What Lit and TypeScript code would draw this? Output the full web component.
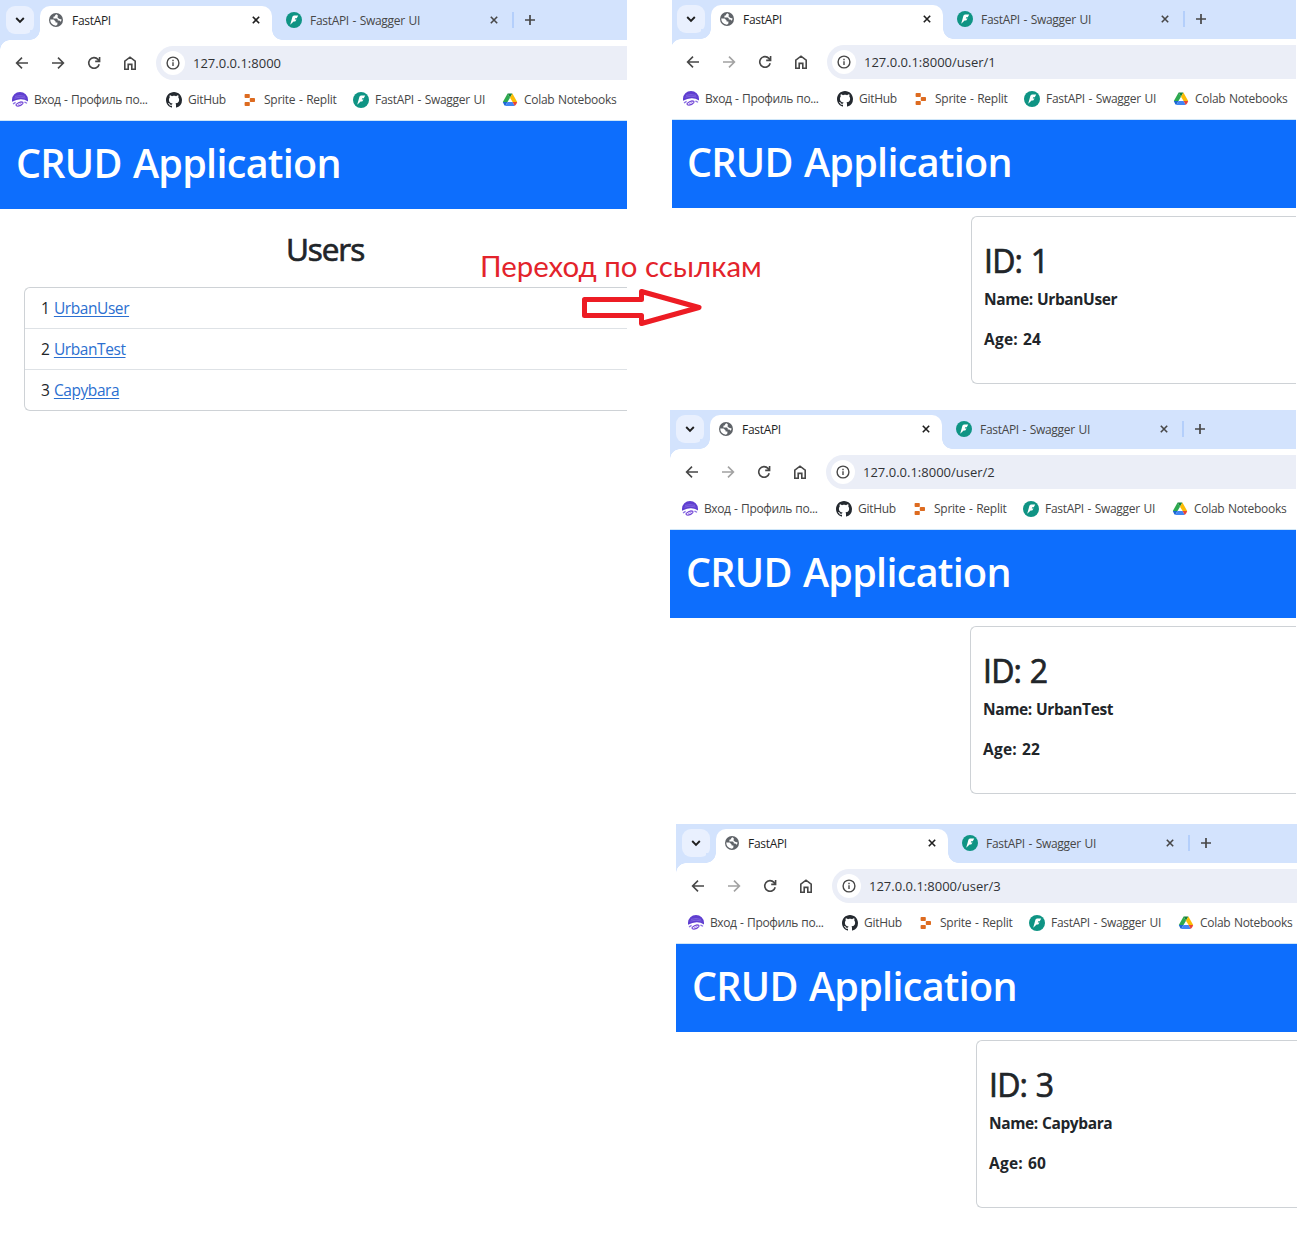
import { LitElement, html, css } from "lit";
import { customElement, property } from "lit/decorators.js";

const fastapi = html`<svg class="ico16" viewBox="0 0 16 16"><circle cx="8" cy="8" r="8" fill="#0f9484"/><path d="M12.2 3.4H8Q6.8 3.6 6.4 4.8L5.4 8.4 4.2 12.8 7.6 9.4H9.2L10.6 7.4H8.8L9.2 6.2H10.8Z" fill="#fff"/></svg>`;
const close = html`<svg class="close" viewBox="0 0 8 8"><path d="M.8.8 7.2 7.2M7.2.8.8 7.2" stroke="currentColor" stroke-width="1.6" fill="none"/></svg>`;
const icons: Record<string, unknown> = {
  profile: html`<svg class="ico16" viewBox="0 0 16 16"><path d="M0 7.8A8 7.8 0 0 1 16 7.8V9.4Q12.4 7 8.4 7.2T0 9.8Z" fill="#5f3ed0"/><path d="M3 4.4Q8 2.8 13 4.4M2.4 6.2Q8 4.2 13.6 6" stroke="#8d74e4" stroke-width=".7" fill="none"/><path d="M1 12Q2.4 11 3.6 10.4M12.4 10.2Q14 10.6 15 11.4" stroke="#8a70e4" stroke-width="1.2" fill="none"/><path d="M4.2 12.4Q6.4 10.2 9 9.8 11.6 9.8 10.8 11.6 9 13.8 6 14.2 3.6 14 4.2 12.4Z" fill="none" stroke="#7347d6" stroke-width="1.2"/><path d="M6 12.6 9.2 11.4" stroke="#9d7fe6" stroke-width=".8"/></svg>`,
  github: html`<svg class="ico16" viewBox="0 0 16 16"><path fill="#24292f" d="M8 0C3.58 0 0 3.58 0 8c0 3.54 2.29 6.53 5.47 7.59.4.07.55-.17.55-.38 0-.19-.01-.82-.01-1.49-2.01.37-2.53-.49-2.69-.94-.09-.23-.48-.94-.82-1.13-.28-.15-.68-.52-.01-.53.63-.01 1.08.58 1.23.82.72 1.21 1.87.87 2.33.66.07-.52.28-.87.51-1.07-1.78-.2-3.64-.89-3.64-3.95 0-.87.31-1.59.82-2.15-.08-.2-.36-1.02.08-2.12 0 0 .67-.21 2.2.82.64-.18 1.32-.27 2-.27s1.36.09 2 .27c1.53-1.04 2.2-.82 2.2-.82.44 1.1.16 1.92.08 2.12.51.56.82 1.27.82 2.15 0 3.07-1.87 3.75-3.65 3.95.29.25.54.73.54 1.48 0 1.07-.01 1.93-.01 2.2 0 .21.15.46.55.38A8.01 8.01 0 0 0 16 8c0-4.42-3.58-8-8-8z"/></svg>`,
  replit: html`<svg class="ico16" viewBox="0 0 16 16"><g fill="#dd6b20"><rect x="2.6" y="2" width="5.2" height="4" rx=".8"/><rect x="7.8" y="6" width="5.2" height="4" rx=".8"/><rect x="2.6" y="10" width="5.2" height="4" rx=".8"/></g></svg>`,
  fastapi,
  drive: html`<svg class="ico16" viewBox="0 0 16 16"><path d="M5.6 1.5H10.4L8 5.7Z" fill="#188038"/><path d="M5.6 1.5 8 5.7 5.5 10H.8Z" fill="#2da94f"/><path d="M10.4 1.5 8 5.7 10.6 10H15.2Z" fill="#fbbc04"/><path d="M.8 10H5.5L3.2 14Q2.2 13.6.8 10Z" fill="#1967d2"/><path d="M5.5 10H10.6L12.8 14H3.2Z" fill="#4285f4"/><path d="M10.6 10H15.2Q14.4 12.8 12.8 14Z" fill="#ea4335"/></svg>`,
};

const bookmarks = [
  { icon: "profile", text: "Вход - Профиль по...", cls: "b1" },
  { icon: "github", text: "GitHub", cls: "b2" },
  { icon: "replit", text: "Sprite - Replit", cls: "b3" },
  { icon: "fastapi", text: "FastAPI - Swagger UI", cls: "b4" },
  { icon: "drive", text: "Colab Notebooks", cls: "b5" },
];

@customElement("browser-window")
class BrowserWindow extends LitElement {
  @property() path = "";
  @property({ type: Boolean }) forward = false;

  static styles = css`
    :host { display: flex; flex-direction: column; overflow: hidden; background: #fff; white-space: nowrap; }
    * { box-sizing: border-box; }
    svg { display: block; flex: none; }
    .ico16 { width: 16px; height: 16px; }
    .strip { display: flex; height: var(--strip, 39px); background: #d3e3fd; flex: none; align-items: flex-end; padding-left: 6px; }
    .menu { width: 28px; height: 28px; margin-bottom: 6px; border-radius: 9px; background: #e9f0fe; display: grid; place-items: center; flex: none; }
    .menu svg { width: 10px; height: 8px; }
    .flare { width: 10px; height: 10px; flex: none; background: radial-gradient(circle at 0 0, #d3e3fd 9.5px, #fff 10px); }
    .flare.l { margin-left: -4px; }
    .flare.r { background: radial-gradient(circle at 100% 0, #d3e3fd 9.5px, #fff 10px); }
    .tab { display: flex; align-items: center; height: 34px; padding-bottom: 6px; flex: none; font-size: 12px; line-height: 16px; }
    .active { width: 232px; background: #fff; border-radius: 10px 10px 0 0; padding-left: 8px; color: #1f1f1f; letter-spacing: -.3px; }
    .globe { margin-right: 8px; }
    .close { width: 8px; height: 8px; }
    .title { width: 180px; padding-top: 2px; }
    .other { padding-left: 4px; color: #474747; letter-spacing: -.3px; word-spacing: .8px; }
    .other .title { margin-left: 8px; }
    .sep { width: 2px; height: 16px; margin-bottom: 12px; background: #b4cffb; margin-left: 14px; }
    .plus { width: 10px; height: 10px; margin: 0 0 15px 11px; }
    .bar { display: flex; align-items: center; height: 46px; flex: none; background: radial-gradient(circle at 100% 100%, #fff 9.5px, #d3e3fd 10px) 0 0 / 10px 10px no-repeat #fff; padding-left: 14px; gap: 20px; color: #474747; }
    .dim { opacity: .5; }
    .omni { display: flex; align-items: center; flex: 1; margin-left: -2px; height: 34px; border-radius: 17px 0 0 17px; background: #ebeef7; padding-left: 5px; font-size: 13px; color: #303236; }
    .info { width: 24px; height: 24px; background: #fff; border-radius: 50%; display: grid; place-items: center; margin-right: 8px; }
    .marks { display: flex; align-items: center; height: 35px; padding: 0 0 6px 12px; border-bottom: 1px solid #cfe6f8; flex: none; font-size: 12px; line-height: 16px; color: #474747; }
    .mark { display: flex; align-items: center; gap: 6px; flex: none; letter-spacing: -.3px; word-spacing: .8px; }
    .b1 { width: 154px; letter-spacing: -.39px; }
    .b2 { width: 76px; }
    .b3 { width: 111px; letter-spacing: -.26px; }
    .b4 { width: 149px; }
    .head { height: 88px; flex: none; background: #0d6efd; color: #fff; padding: 15px 16px; font-size: 39.5px; font-weight: 600; line-height: 54px; letter-spacing: -.7px; word-spacing: 1.6px; }
  `;

  render() {
    return html`
      <div class="strip">
        <div class="menu"><svg viewBox="0 0 10 8"><path d="M1.2 2 5 5.8 8.8 2" fill="none" stroke="#1f1f1f" stroke-width="1.9"/></svg></div>
        <div class="flare l"></div>
        <div class="tab active">
          <svg class="ico16 globe" viewBox="0 0 16 16"><circle cx="8" cy="8" r="7" fill="#5f6368"/><path d="M8.6 2.3Q6.8 2.8 7 4.2L5.4 4.8V6.6H8.6Q10 6.8 9.8 8.6H11.4L12.6 9.8Q13.6 8.6 13.6 7.6L11 6.8 9.4 5.2 10 3.8ZM2.2 7.6H5.6L7.6 9.6V10.6H9.4V12.4L8 13.7Q2.4 13.2 2.2 7.6Z" fill="#fff"/></svg>
          <span class="title">FastAPI</span>${close}
        </div>
        <div class="flare r"></div>
        <div class="tab other">${fastapi}<span class="title">FastAPI - Swagger UI</span>${close}</div>
        <div class="sep"></div>
        <svg class="plus" viewBox="0 0 10 10"><path d="M5 0V10M0 5H10" stroke="#474747" stroke-width="1.7"/></svg>
      </div>
      <div class="bar">
        <svg class="ico16" viewBox="0 0 16 16"><path d="M14 8H3M8 2.6 2.6 8 8 13.4" fill="none" stroke="currentColor" stroke-width="1.6"/></svg>
        <svg class="ico16 ${this.forward ? "" : "dim"}" viewBox="0 0 16 16"><path d="M2 8H13M8 2.6 13.4 8 8 13.4" fill="none" stroke="currentColor" stroke-width="1.6"/></svg>
        <svg class="ico16" viewBox="0 0 16 16"><path d="M13.2 9.2A5.3 5.3 0 1 1 12 4.4L13.4 6.2M13.6 2V6.4H9.2" fill="none" stroke="currentColor" stroke-width="1.6"/></svg>
        <svg class="ico16" viewBox="0 0 16 16"><path d="M2.8 14.2V6.2L8 2.2 13.2 6.2V14.2H9.8V9.4H6.2V14.2Z" fill="none" stroke="currentColor" stroke-width="1.6"/></svg>
        <div class="omni"><div class="info"><svg class="ico16" viewBox="0 0 16 16"><circle cx="8" cy="8" r="5.9" fill="none" stroke="#474747" stroke-width="1.4"/><path d="M8 7.2V11M8 4.8V6.2" stroke="#474747" stroke-width="1.4"/></svg></div><span>127.0.0.1:8000${this.path}</span></div>
      </div>
      <div class="marks">${bookmarks.map((b) => html`<div class="mark ${b.cls}">${icons[b.icon]}<span>${b.text}</span></div>`)}</div>
      <div class="head">CRUD Application</div>
      <slot></slot>
    `;
  }
}

const users = [
  { id: 1, name: "UrbanUser", age: 24 },
  { id: 2, name: "UrbanTest", age: 22 },
  { id: 3, name: "Capybara", age: 60 },
];

@customElement("app-root")
class AppRoot extends LitElement {
  static styles = css`
    :host { display: block; position: relative; width: 1302px; height: 1248px; overflow: hidden; background: #fff; font-family: "Open Sans", "Noto Sans", sans-serif; color: #212529; white-space: nowrap; }
    * { box-sizing: border-box; }
    .board { display: flex; height: 100%; }
    .main { --strip: 40px; width: 627px; height: 412px; }
    .side { display: flex; flex-direction: column; margin-left: 43px; }
    .w1 { height: 410px; width: 625px; margin-left: 1px; clip-path: inset(0 0 0 1px); }
    .w2 { height: 414px; width: 626px; }
    .w3 { height: 400px; width: 621px; margin-left: 6px; }
    .users { margin: 20px 0 0 286px; font-size: 31.5px; line-height: 40px; font-weight: 500; letter-spacing: -1.1px; -webkit-text-stroke: .7px currentColor; }
    .list { margin: 18px 0 0 24px; border: 1px solid #ced2d6; border-right: 0; border-radius: 6px 0 0 6px; font-size: 15.5px; height: 124px; }
    .row { height: 41px; padding: 8px 16px; line-height: 24px; border-bottom: 1px solid #dee2e6; display: flex; gap: 4px; }
    .row:last-child { border-bottom: 0; }
    .row a { color: #2b6fd0; text-decoration: underline; text-underline-offset: 2px; letter-spacing: -.42px; }
    .card { margin: 8px 0 0 300px; height: 168px; border: 1px solid #ced2d6; border-right: 0; border-radius: 6px 0 0 6px; padding: 24px 12px; }
    .id { font-size: 32px; line-height: 40px; font-weight: 500; letter-spacing: -.8px; word-spacing: 1px; -webkit-text-stroke: .7px currentColor; }
    .line { font-size: 15.5px; font-weight: 700; line-height: 24px; margin: 6px 0 16px; letter-spacing: -.4px; word-spacing: .6px; }
    .line + .line { margin: 0; letter-spacing: .25px; }
    .note { position: absolute; left: 480px; top: 248px; font: 29.4px/36px Lato, "Open Sans", sans-serif; color: #e3232b; }
    .arrow { position: absolute; left: 580px; top: 286px; width: 124px; height: 43px; }
  `;
  render() {
    return html`
      <div class="board">
        <browser-window class="main" forward>
          <div class="users">Users</div>
          <div class="list">${users.map((u) => html`<div class="row"><span>${u.id}</span><a>${u.name}</a></div>`)}</div>
        </browser-window>
        <div class="side">
          ${users.map((u) => html`<browser-window class="w${u.id}" path="/user/${u.id}"><div class="card"><div class="id">ID: ${u.id}</div><div class="line">Name: ${u.name}</div><div class="line">Age: ${u.age}</div></div></browser-window>`)}
        </div>
      </div>
      <div class="note">Переход по ссылкам</div>
      <svg class="arrow" viewBox="580 286 124 43"><path d="M584.5 299.5H641.5V291.5L699 307.5 641.5 323.5V315.5H584.5Z" fill="none" stroke="#ed1c24" stroke-width="5" stroke-linejoin="round"/></svg>
    `;
  }
}
